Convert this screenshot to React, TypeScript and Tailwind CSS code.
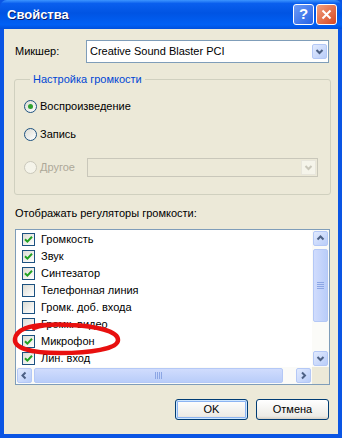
import React from 'react';

const Check: React.FC<{ checked: boolean }> = ({ checked }) => (
    <span className="w-[13px] h-[13px] shrink-0 border border-[#1C5180] bg-[linear-gradient(135deg,#DCDCD4,#FFFFFF)] flex items-center justify-center">
        {checked && (
            <svg width="9" height="9" viewBox="0 0 9 9">
                <path d="M1 4.2 L3.4 6.6 L8 1.8" stroke="#21A121" strokeWidth="2" fill="none" />
            </svg>
        )}
    </span>
);

const Radio: React.FC<{ checked?: boolean; disabled?: boolean }> = ({ checked, disabled }) => (
    <span
        className={
            disabled
                ? "w-[13px] h-[13px] shrink-0 rounded-full border border-[#CAC8BB] bg-[#F5F4EA]"
                : "w-[13px] h-[13px] shrink-0 rounded-full border border-[#1C5180] bg-[linear-gradient(135deg,#DCDCD4,#FFFFFF)] flex items-center justify-center"
        }
    >
        {checked && <span className="w-[5px] h-[5px] rounded-full bg-[#2FA12F]" />}
    </span>
);

const Chevron: React.FC<{ dir: 'up' | 'down' | 'left' | 'right'; color?: string }> = ({ dir, color = '#4D6185' }) => {
    const d = {
        up: 'M1.5 5.5 L4.5 2.5 L7.5 5.5',
        down: 'M1.5 3 L4.5 6 L7.5 3',
        left: 'M5.5 1.5 L2.5 4.5 L5.5 7.5',
        right: 'M3 1.5 L6 4.5 L3 7.5',
    }[dir];
    return (
        <svg width="9" height="9" viewBox="0 0 9 9">
            <path d={d} stroke={color} strokeWidth="2" fill="none" />
        </svg>
    );
};

const ScrollBtn: React.FC<{ dir: 'up' | 'down' | 'left' | 'right' }> = ({ dir }) => (
    <div className="w-[17px] h-[17px] shrink-0 p-[1px]">
        <div className="w-full h-full rounded-[2px] border border-[#B4C8F6] bg-[linear-gradient(135deg,#E1EAFE,#B9CDF9)] flex items-center justify-center">
            <Chevron dir={dir} />
        </div>
    </div>
);

const items: [string, boolean][] = [
    ['Громкость', true],
    ['Звук', true],
    ['Синтезатор', true],
    ['Телефонная линия', false],
    ['Громк. доб. входа', false],
    ['Громк. видео', false],
    ['Микрофон', true],
    ['Лин. вход', true],
];

const App: React.FC = () => {
    return (
        <div className="w-[342px] h-[438px] flex flex-col bg-[#0A55E4] font-['Liberation_Sans',Arial,sans-serif] text-[11px] text-black">
            {/* title bar */}
            <div className="h-[29px] shrink-0 flex items-center pl-[7px] pr-[5px] rounded-t-[7px] bg-[linear-gradient(180deg,#3D95FF_0%,#0A5FEE_12%,#0054E3_45%,#0060F5_85%,#0050DD_100%)]">
                <span className="flex-1 text-white font-bold text-[13px] [text-shadow:1px_1px_#0A1E6A]">Свойства</span>
                <div className="w-[21px] h-[21px] rounded-[3px] border border-white bg-[linear-gradient(135deg,#6E9BF5,#2563E6)] flex items-center justify-center text-white font-bold text-[15px] mr-[2px]">?</div>
                <div className="w-[21px] h-[21px] rounded-[3px] border border-white bg-[linear-gradient(135deg,#F0A080,#D8461F)] flex items-center justify-center">
                    <svg width="11" height="11" viewBox="0 0 11 11">
                        <path d="M1.5 1.5 L9.5 9.5 M9.5 1.5 L1.5 9.5" stroke="white" strokeWidth="2" />
                    </svg>
                </div>
            </div>

            {/* body */}
            <div className="flex-1 mx-[4px] mb-[4px] bg-[#ECE9D8] flex flex-col relative">
                {/* mixer */}
                <div className="flex items-center mt-[11px] ml-[11px] mr-[9px]">
                    <span className="w-[71px]">Микшер:</span>
                    <div className="flex-1 h-[23px] border border-[#7F9DB9] bg-white flex items-center pl-[3px]">
                        <span className="flex-1">Creative Sound Blaster PCI</span>
                        <ScrollBtn dir="down" />
                    </div>
                </div>

                {/* group */}
                <fieldset className="mt-[10px] ml-[10px] mr-[7px] border border-[#D0D0BF] rounded-[3px] pl-[9px] pr-[12px] pb-[17px]">
                    <legend className="ml-[6px] px-[3px] text-[#0046D5] leading-[13px]">Настройка громкости</legend>
                    <div className="h-[20px] mt-[10px] flex items-center gap-[3px]">
                        <Radio checked />
                        <span>Воспроизведение</span>
                    </div>
                    <div className="h-[20px] mt-[8px] flex items-center gap-[3px]">
                        <Radio />
                        <span>Запись</span>
                    </div>
                    <div className="h-[19px] mt-[14px] flex items-center">
                        <div className="w-[63px] flex items-center gap-[3px]">
                            <Radio disabled />
                            <span className="text-[#ACA899]">Другое</span>
                        </div>
                        <div className="flex-1 h-[19px] border border-[#C9C7BA] flex items-center justify-end pr-[1px]">
                            <div className="w-[15px] h-[15px] bg-[#F5F4EA] border border-[#E8E6DC] flex items-center justify-center">
                                <Chevron dir="down" color="#C9C7BA" />
                            </div>
                        </div>
                    </div>
                </fieldset>

                <div className="mt-[12px] ml-[11px] leading-[13px]">Отображать регуляторы громкости:</div>

                {/* list */}
                <div className="mt-[9px] ml-[11px] mr-[8px] h-[156px] border border-[#7F9DB9] bg-white flex flex-col">
                    <div className="flex flex-1 min-h-0">
                        <div className="flex-1 overflow-hidden pt-[1px]">
                            {items.map(([label, checked]) => (
                                <div key={label} className="h-[17px] flex items-center pl-[6px] gap-[6px]">
                                    <Check checked={checked} />
                                    <span>{label}</span>
                                </div>
                            ))}
                        </div>
                        <div className="w-[17px] flex flex-col bg-[#FBFBF8]">
                            <ScrollBtn dir="up" />
                            <div className="h-[76px] p-[1px] pt-[2px]">
                                <div className="w-full h-full rounded-[2px] border border-[#B4C8F6] bg-[linear-gradient(90deg,#D0DCFD,#B9CDF9)] flex flex-col items-center justify-center gap-[1px]">
                                    <span className="w-[7px] h-[1px] bg-[#8CA6E4]" />
                                    <span className="w-[7px] h-[1px] bg-[#8CA6E4]" />
                                    <span className="w-[7px] h-[1px] bg-[#8CA6E4]" />
                                    <span className="w-[7px] h-[1px] bg-[#8CA6E4]" />
                                </div>
                            </div>
                            <div className="flex-1" />
                            <ScrollBtn dir="down" />
                        </div>
                    </div>
                    <div className="h-[17px] flex bg-[#FBFBF8]">
                        <ScrollBtn dir="left" />
                        <div className="w-[251px] p-[1px]">
                            <div className="w-full h-full rounded-[2px] border border-[#B4C8F6] bg-[linear-gradient(180deg,#D0DCFD,#B9CDF9)] flex items-center justify-center gap-[1px]">
                                <span className="w-[1px] h-[7px] bg-[#8CA6E4]" />
                                <span className="w-[1px] h-[7px] bg-[#8CA6E4]" />
                                <span className="w-[1px] h-[7px] bg-[#8CA6E4]" />
                                <span className="w-[1px] h-[7px] bg-[#8CA6E4]" />
                            </div>
                        </div>
                        <div className="flex-1" />
                        <ScrollBtn dir="right" />
                        <div className="w-[17px] bg-[#ECE9D8]" />
                    </div>
                </div>

                {/* buttons */}
                <div className="mt-[14px] mr-[9px] flex justify-end gap-[8px]">
                    <button className="w-[73px] h-[21px] rounded-[3px] border border-[#003C74] bg-[linear-gradient(180deg,#FFFFFF,#ECEBE6_85%,#D6D0C5)] shadow-[inset_0_0_0_1px_#CEE7FF,inset_0_0_0_2px_#8CB4F2]">OK</button>
                    <button className="w-[73px] h-[21px] rounded-[3px] border border-[#003C74] bg-[linear-gradient(180deg,#FFFFFF,#ECEBE6_85%,#D6D0C5)]">Отмена</button>
                </div>

                {/* red marker annotation */}
                <svg className="absolute left-[6px] top-[292px] pointer-events-none" width="116" height="40" viewBox="0 0 116 40">
                    <path
                        d="M40 4 C20 3 6 9 5 18 C4 27 20 32 50 32 C80 32 108 28 108 19 C108 10 86 5 60 4 C45 3 32 4 24 7"
                        stroke="#E8100F"
                        strokeWidth="4.5"
                        fill="none"
                        strokeLinecap="round"
                    />
                </svg>
            </div>
        </div>
    );
};

export default App;
